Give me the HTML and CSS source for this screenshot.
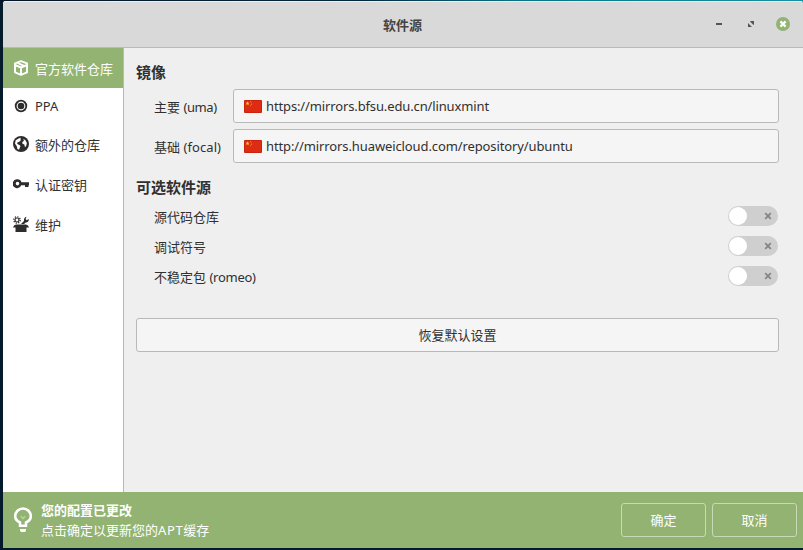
FILE: index.html
```
<!DOCTYPE html>
<html lang="zh-CN">
<head>
<meta charset="utf-8">
<title>软件源</title>
<link rel="stylesheet" href="styles.css">
</head>
<body>
<div class="window">
  <header class="titlebar">
    <h1>软件源</h1>
    <div class="controls">
      <svg width="21" height="21" viewBox="0 0 21 21"><path d="M7 10h6v2H7z" fill="#555"/></svg>
      <svg width="21" height="21" viewBox="0 0 21 21"><path d="M9 8h4v4l-1-.5L9.500 9zM7 10l3.500 3.500.5.500H7z" fill="#555"/></svg>
      <svg width="21" height="21" viewBox="0 0 21 21"><circle cx="10" cy="11" r="7" fill="#92b372"/><path d="M7.400 8.400l5.200 5.200M12.600 8.400l-5.200 5.200" stroke="#fff" stroke-width="2.200"/></svg>
    </div>
  </header>
  <div class="body">
    <nav class="sidebar">
      <a class="item active">
        <svg width="16" height="16" viewBox="0 0 16 16" fill="none" stroke="#fff" stroke-width="1.900" stroke-linejoin="round"><path d="M8 1.100l6 2.300v9L8 14.900l-6-2.500v-9zM2 5l6 2.500L14 5M8 7.500V15M4.800 3l6.200 2.800"/></svg>
        <span>官方软件仓库</span>
      </a>
      <a class="item short">
        <svg width="16" height="16" viewBox="0 0 16 16"><circle cx="8" cy="8" r="5.300" fill="none" stroke="#2d2d2d" stroke-width="1.800"/><circle cx="8" cy="8" r="3.300" fill="#2d2d2d"/></svg>
        <span class="ppa">PPA</span>
      </a>
      <a class="item">
        <svg width="16" height="16" viewBox="0 0 16 16"><circle cx="8" cy="8" r="8" fill="#2d2d2d"/><path d="M6 2.200L8 1.800 7.300 3l.7 1-2 2-1.500.3L4.200 8l1.800.8 1.500 1.200-.8 2-.7 1.800-1.600-.8-.6-2.700L2 7.500l.7-3.200zM10.200 2.800l2.200 1.400L13.900 7l-.7 3-1.200 1.300-.7-2.800-1.800-.8-.2-1.700L11 4.800z" fill="#fff"/></svg>
        <span>额外的仓库</span>
      </a>
      <a class="item">
        <svg width="16" height="16" viewBox="0 0 16 16" fill="#2d2d2d"><path fill-rule="evenodd" d="M4.500 3.300a4.200 4.200 0 0 1 4 3H16v2.900h-.5V11H12V9.200H8.200A4.400 4.400 0 1 1 4.500 3.300zM4.500 5.800a1.800 1.800 0 1 0 0 3.600 1.800 1.800 0 0 0 0-3.600z"/></svg>
        <span>认证密钥</span>
      </a>
      <a class="item">
        <svg width="16" height="16" viewBox="0 0 16 16" fill="#2d2d2d"><circle cx="4" cy="4" r="2" fill="none" stroke="#2d2d2d" stroke-width="1.200"/><circle cx="4" cy="4" r="3.200" fill="none" stroke="#2d2d2d" stroke-width="1.300" stroke-dasharray="1.250"/><path d="M8 8l3-3c-.3-2 .5-3.700 2.500-4.200L12.600 3l1 1.200L15.800 3c.2 2-1 3.500-3 3.500L11 8zM1 9.500l2-1h10l2 1 1 2h-2.500V16h-11v-4.500H0z"/></svg>
        <span>维护</span>
      </a>
    </nav>
    <main class="content">
      <h2>镜像</h2>
      <div class="mirror">
        <label>主要 <span class="uma">(uma)</span></label>
        <button class="field"><svg class="flag" width="18" height="13" viewBox="0 0 18 13"><rect width="18" height="13" rx="1" fill="#c9240e"/><rect x="1" y="1" width="16" height="11" fill="#de2b13"/><path d="M3.500 1.500l.6 1.300h1.400L4.400 3.700l.4 1.500-1.300-.9-1.300.9.400-1.500-1.100-.9h1.400z" fill="#ffd51c"/><path d="M6 1h1v.8H6zM7 2.400h1v.8H7zM7 4.200h1V5H7zM6 5.500h1v.8H6z" fill="#f0a018"/></svg><span class="url1">https://mirrors.bfsu.edu.cn/linuxmint</span></button>
      </div>
      <div class="mirror">
        <label>基础 <span class="focal">(focal)</span></label>
        <button class="field"><svg class="flag" width="18" height="13" viewBox="0 0 18 13"><rect width="18" height="13" rx="1" fill="#c9240e"/><rect x="1" y="1" width="16" height="11" fill="#de2b13"/><path d="M3.500 1.500l.6 1.300h1.400L4.400 3.700l.4 1.500-1.300-.9-1.300.9.400-1.500-1.100-.9h1.400z" fill="#ffd51c"/><path d="M6 1h1v.8H6zM7 2.400h1v.8H7zM7 4.200h1V5H7zM6 5.500h1v.8H6z" fill="#f0a018"/></svg><span class="url2">http://mirrors.huaweicloud.com/repository/ubuntu</span></button>
      </div>
      <h2 class="optional">可选软件源</h2>
      <div class="option"><span>源代码仓库</span><i class="switch"><svg width="8" height="8" viewBox="0 0 8 8"><path d="M1.200 1.200l5.600 5.600M6.800 1.200L1.200 6.800" stroke="#858585" stroke-width="1.800"/></svg></i></div>
      <div class="option"><span>调试符号</span><i class="switch"><svg width="8" height="8" viewBox="0 0 8 8"><path d="M1.200 1.200l5.600 5.600M6.800 1.200L1.200 6.800" stroke="#858585" stroke-width="1.800"/></svg></i></div>
      <div class="option"><span>不稳定包 <span class="romeo">(romeo)</span></span><i class="switch"><svg width="8" height="8" viewBox="0 0 8 8"><path d="M1.200 1.200l5.600 5.600M6.800 1.200L1.200 6.800" stroke="#858585" stroke-width="1.800"/></svg></i></div>
      <button class="restore">恢复默认设置</button>
    </main>
  </div>
  <footer class="infobar">
    <svg width="20" height="26" viewBox="0 0 20 26"><path d="M7 18v-2.500C4.300 14.300 2.200 12.300 2.200 9.300a7.800 7.800 0 0 1 15.600 0c0 3-2.100 5-4.800 6.200V18" fill="none" stroke="#fff" stroke-width="2.600"/><path d="M5.800 17.500h8.400V20H5.800zM7 22h6v1.500L12 25H8l-1-1.500z" fill="#fff"/><path d="M7.800 9.300L10 11.500l2.200-2.200" fill="none" stroke="#bdd1a8" stroke-width="1.400"/></svg>
    <div class="message"><strong>您的配置已更改</strong><span>点击确定以更新您的<span class="apt">APT</span>缓存</span></div>
    <button>确定</button>
    <button>取消</button>
  </footer>
</div>
</body>
</html>
```
FILE: styles.css
```
* { box-sizing: border-box; }
body {
  margin: 0;
  width: 803px;
  height: 550px;
  overflow: hidden;
  padding: 1px 0 2px 3px;
  background: linear-gradient(90deg, #021425 0, #03283f 45%, #087588 65%, #1590a2 100%) 0 0 / 100% 2px no-repeat, #031b2b;
  font: 13px/20px "Noto Sans", "Noto Sans CJK SC", sans-serif;
  color: #303030;
}
button { font: inherit; color: inherit; padding: 0; }
.window { height: 547px; display: flex; flex-direction: column; background: #efefef; border-radius: 3px 3px 0 0; overflow: hidden; }
.titlebar {
  height: 47px;
  flex: none;
  display: flex;
  align-items: center;
  justify-content: center;
  position: relative;
  background: #d9d9d9;
  border-top: 1px solid #efefef;
  border-bottom: 1px solid #b9b9b9;
}
.titlebar h1 { margin: 1px 1px 0 0; font-size: 13px; font-weight: 700; color: #444; }
.controls { position: absolute; right: 9px; top: 11px; display: flex; gap: 11px; }
.body { flex: 1; display: flex; min-height: 0; }
.sidebar { width: 121px; background: #fff; border-right: 1px solid #b9b9b9; }
.item { display: flex; align-items: center; height: 40px; padding-left: 10px; gap: 6px; }
.item span { position: relative; top: 1px; }
.item.short { height: 36px; }
.item.short span { top: 0; }
.item.active { background: #92b372; color: #fff; }
.content { flex: 1; padding: 13px 24px 0 12px; }
h2 { font-size: 15px; line-height: 22px; margin: 0 0 6px; font-weight: 700; }
.mirror { display: flex; height: 34px; margin-bottom: 6px; align-items: center; }
.mirror label { width: 97px; padding: 2px 0 0 18px; white-space: nowrap; }
.field { flex: 1; height: 34px; display: flex; align-items: center; gap: 4px; padding-left: 10px; background: #f5f5f5; border: 1px solid #b9b9b9; border-radius: 3px; }
.uma { letter-spacing: -.4px; }
.focal { letter-spacing: .1px; }
.url1 { letter-spacing: -.13px; }
.url2 { letter-spacing: -.11px; }
.romeo { letter-spacing: -.25px; }
.apt { letter-spacing: .6px; }
h2.optional { margin: 13px 0 3px; }
.option { height: 30px; display: flex; align-items: center; justify-content: space-between; padding: 0 1px 0 18px; }
.option > span { padding-top: 2px; }
.switch { width: 50px; height: 20px; border-radius: 10px; background: #cfcfcf; display: flex; align-items: center; justify-content: space-between; padding: 0 6px 0 1px; }
.switch::before { content: ""; width: 18px; height: 18px; border-radius: 50%; background: #fff; }
.restore { display: block; width: 100%; height: 34px; margin-top: 27px; background: #f5f5f5; border: 1px solid #b9b9b9; border-radius: 3px; }
.infobar { height: 56px; flex: none; display: flex; align-items: center; background: #92b372; color: #fff; padding: 0 6px 0 10px; }
.message { flex: 1; margin-left: 8px; display: flex; flex-direction: column; }
.infobar button { width: 85px; height: 34px; margin-left: 6px; background: none; border: 1px solid #c9d9b8; border-radius: 3px; }
```
